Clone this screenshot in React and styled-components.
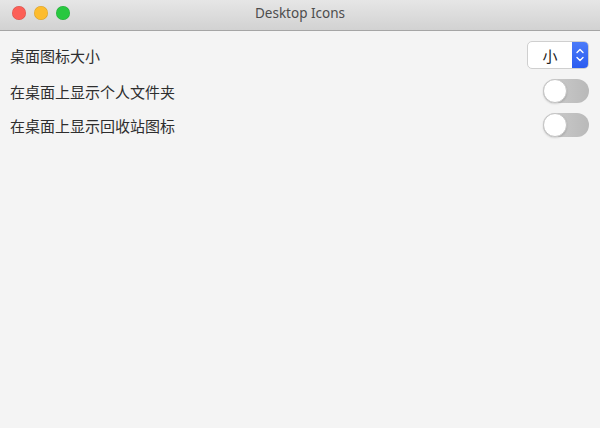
import React, { useState } from 'react';
import styled, { createGlobalStyle } from 'styled-components';

const GlobalStyle = createGlobalStyle`
  html, body {
    margin: 0;
    padding: 0;
    background: #f4f4f4;
  }
  body {
    font-family: "Noto Sans", "Noto Sans CJK SC", sans-serif;
  }
`;

const Window = styled.div`
  width: 600px;
  height: 428px;
  display: flex;
  flex-direction: column;
  background: #f4f4f4;
  overflow: hidden;
`;

const TitleBar = styled.div`
  height: 31px;
  flex-shrink: 0;
  display: flex;
  align-items: center;
  position: relative;
  background: linear-gradient(#e6e6e6, #d2d2d2);
  border-bottom: 1px solid #a5a5a5;
  box-sizing: border-box;
`;

const Lights = styled.div`
  display: flex;
  gap: 8px;
  padding-left: 12px;
  margin-top: -4px;
`;

const Light = styled.span`
  width: 14px;
  height: 14px;
  border-radius: 50%;
  background: ${(props) => props.color};
  box-shadow: inset 0 0 0 0.5px rgba(0, 0, 0, 0.15);
`;

const Title = styled.div`
  position: absolute;
  left: 0;
  right: 0;
  top: 4px;
  text-align: center;
  font-family: "Noto Sans", sans-serif;
  font-size: 13.5px;
  color: #4d4d4d;
  pointer-events: none;
`;

const Content = styled.div`
  display: flex;
  flex-direction: column;
  gap: 10px;
  padding: 10px 11px 0 10px;
`;

const Row = styled.div`
  display: flex;
  align-items: center;
  justify-content: space-between;
  height: ${(props) => props.h}px;
`;

const Label = styled.span`
  font-family: "Noto Sans CJK SC", sans-serif;
  font-size: 15px;
  color: #2e2e2e;
`;

const Select = styled.div`
  width: 62px;
  height: 28px;
  display: flex;
  box-sizing: border-box;
  border: 1px solid #cfcfcf;
  border-radius: 5px;
  background: #fff;
  overflow: hidden;
`;

const SelectValue = styled.span`
  flex: 1;
  display: flex;
  align-items: center;
  justify-content: center;
  font-family: "Noto Sans CJK SC", sans-serif;
  font-size: 15px;
  color: #222;
`;

const Stepper = styled.span`
  width: 16px;
  display: flex;
  align-items: center;
  justify-content: center;
  background: linear-gradient(#4b7bf9, #2b5cf0);
`;

const Track = styled.button`
  width: 46px;
  height: 24px;
  padding: 0;
  border: none;
  border-radius: 12px;
  background: ${(props) => (props.on ? '#3e6ef5' : 'linear-gradient(90deg, #cfcfcf, #b9b9b9)')};
  display: flex;
  align-items: center;
  justify-content: ${(props) => (props.on ? 'flex-end' : 'flex-start')};
  cursor: pointer;
  outline: 0;
`;

const Knob = styled.span`
  width: 24px;
  height: 24px;
  box-sizing: border-box;
  border-radius: 50%;
  background: #fff;
  border: 1px solid #c4c4c4;
  box-shadow: 0 1px 2px rgba(0, 0, 0, 0.15);
`;

const Arrows = () => (
  <svg width="10" height="18" viewBox="0 0 10 18">
    <path d="M2 6.5 L5 3.5 L8 6.5" stroke="#fff" strokeWidth="1.4" fill="none" strokeLinecap="round" strokeLinejoin="round" />
    <path d="M2 11.5 L5 14.5 L8 11.5" stroke="#fff" strokeWidth="1.4" fill="none" strokeLinecap="round" strokeLinejoin="round" />
  </svg>
);

const Toggle = ({ on, onClick }) => (
  <Track on={on ? 1 : 0} onClick={onClick}>
    <Knob />
  </Track>
);

const App = () => {
  const [home, setHome] = useState(false);
  const [trash, setTrash] = useState(false);

  return (
    <Window>
      <GlobalStyle />
      <TitleBar>
        <Lights>
          <Light color="#fc5f57" />
          <Light color="#fdbc2e" />
          <Light color="#28c840" />
        </Lights>
        <Title>Desktop Icons</Title>
      </TitleBar>
      <Content>
        <Row h={28}>
          <Label>桌面图标大小</Label>
          <Select>
            <SelectValue>小</SelectValue>
            <Stepper>
              <Arrows />
            </Stepper>
          </Select>
        </Row>
        <Row h={24}>
          <Label>在桌面上显示个人文件夹</Label>
          <Toggle on={home} onClick={() => setHome(!home)} />
        </Row>
        <Row h={24}>
          <Label>在桌面上显示回收站图标</Label>
          <Toggle on={trash} onClick={() => setTrash(!trash)} />
        </Row>
      </Content>
    </Window>
  );
};

export default App;
